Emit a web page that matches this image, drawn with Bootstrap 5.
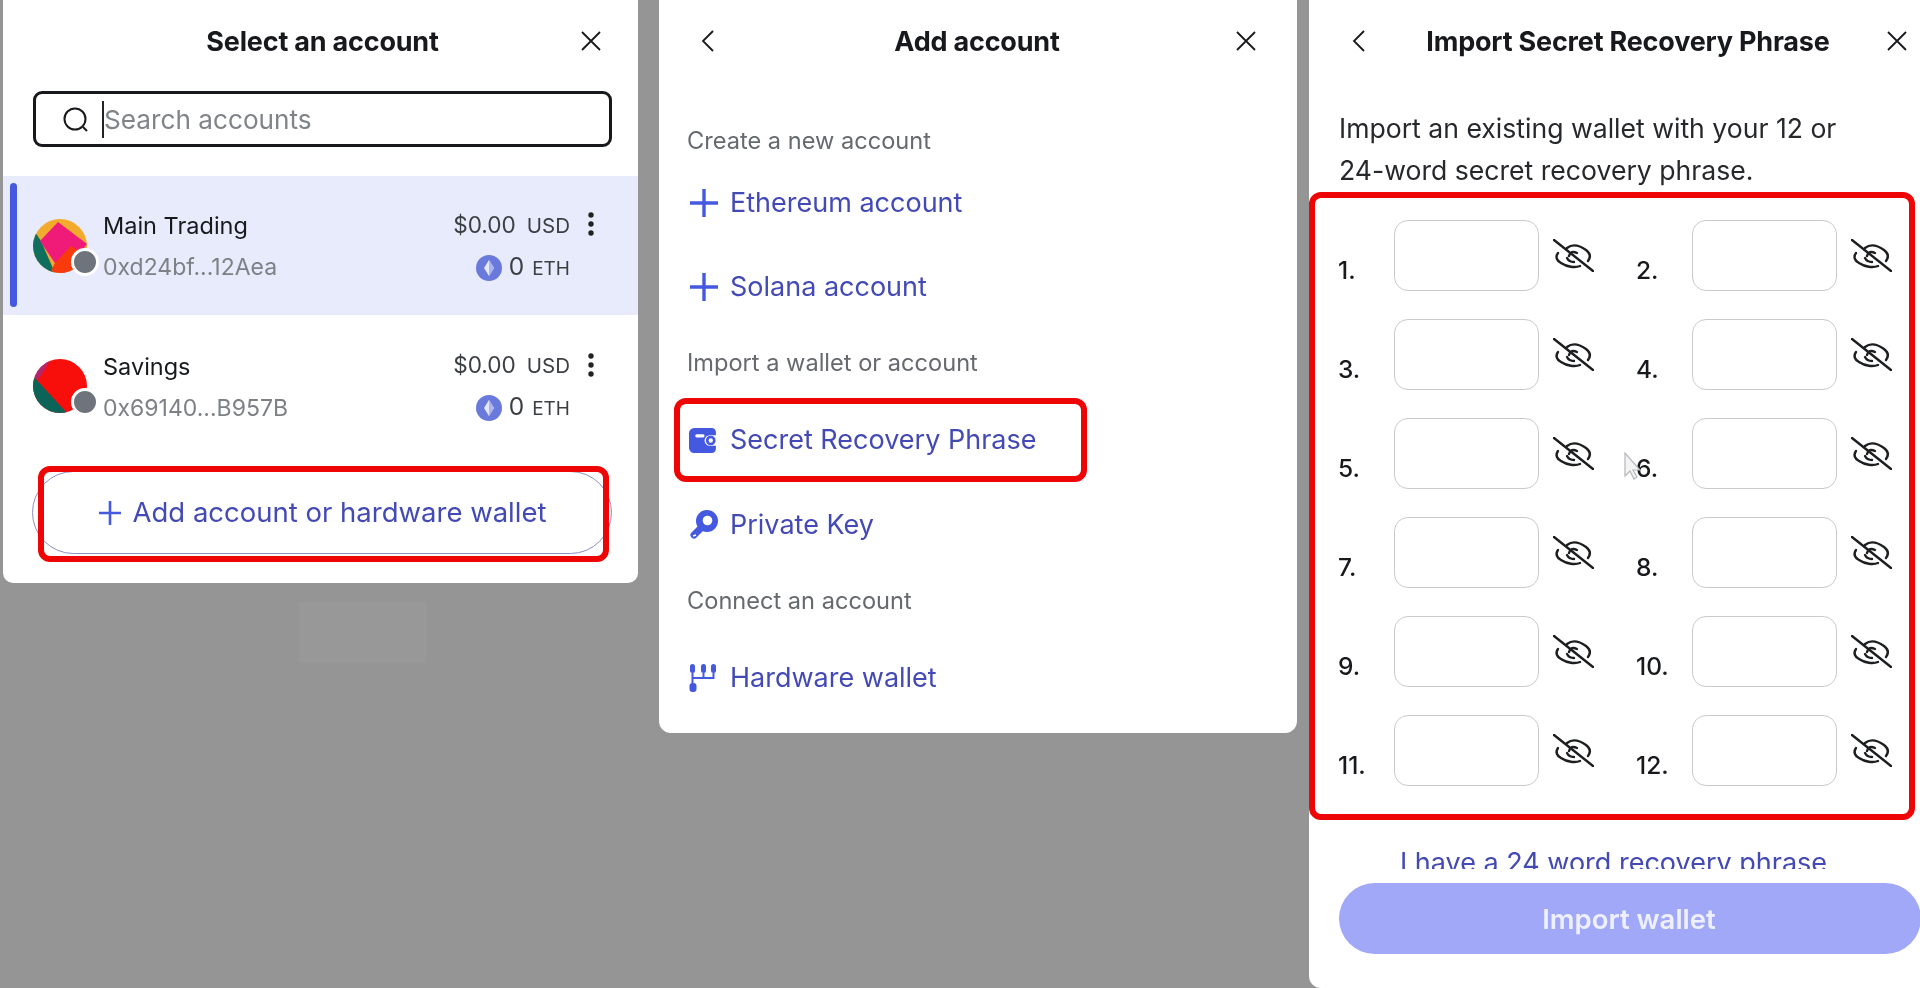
<!DOCTYPE html>
<html lang="en">
<head>
<meta charset="utf-8">
<title>Wallet account steps</title>
<link href="https://cdn.jsdelivr.net/npm/bootstrap@5.3.0/dist/css/bootstrap.min.css" rel="stylesheet">
<style>
:root { --ink:#17191c; --link:#4349b5; --accent:#4459e0; --mute:#666a6e; }
html, body { height:988px; overflow:hidden; }
body { background:#959595; font-family:Inter,"Noto Sans","Liberation Sans",sans-serif; color:var(--ink); }
.stage { height:988px; filter:blur(.45px); position:relative; }
.pane { background:#fff; flex:none; position:relative; }
.pane-a { width:635px; height:583px; margin-left:3px; border-radius:0 0 10px 10px; }
.pane-b { width:638px; height:733px; margin-left:21px; border-radius:0 0 12px 12px; }
.pane-c { width:612px; height:988px; margin-left:12px; border-radius:0 0 0 12px; }
.head { height:82px; font-size:27px; font-weight:700; letter-spacing:-.2px; }
.ttl { padding-top:2px; }
.head-btn { width:30px; height:30px; flex:none; }
.head-btn svg { display:block; }
.lead-a { margin-left:66px; }
.trail-a { margin-right:32px; }
.lead-b { margin-left:34px; }
.trail-b { margin-right:36px; }
.lead-c { margin-left:35px; }
.trail-c { margin-right:9px; }
.search-wrap { padding:9px 26px 29px 30px; }
.search-box { height:56px; border:3px solid #17191c; border-radius:9px; padding-left:26px; gap:12px; }
.search-text { font-size:26.200px; color:#808489; border-left:2px solid #222; line-height:36px; margin-left:1px; padding-top:1px; }
.acct { height:140px; padding:0 0 0 30px; }
.acct.on { background:#e8ebfb; height:139px; }
.acct.second { padding-top:2px; }
.acct-bar { position:absolute; left:7px; top:7px; bottom:8px; width:7px; border-radius:4px; background:var(--accent); }
.acct-main { width:70px; flex:none; position:relative; height:54px; }
.acct-dot { position:absolute; left:38px; top:29px; width:28px; height:28px; border-radius:50%; background:#6f737c; border:3px solid #fff; }
.acct-name { font-size:23.500px; line-height:34px; margin-top:2px; }
.acct-addr { font-size:23px; line-height:34px; color:#7d8186; margin-top:7px; }
.acct-right { width:140px; text-align:right; font-size:22.600px; line-height:34px; color:#3b3e42; white-space:nowrap; padding-top:2px; }
.unit { font-size:20.500px; margin-left:11px; }
.coin-row { font-size:24.500px; margin-top:6px; }
.coin-row .unit { font-size:19px; margin-left:8px; }
.eth-coin { margin-right:7px; vertical-align:-6px; }
.dots { width:6px; margin:36px 44px 0 18px; }
.add-btn { margin:16px 26px 0 29px; height:83px; border:1px solid #8a8fc4; border-radius:42px; background:#fff; color:var(--link); font-size:27.500px; gap:11px; }
.red-a, .red-b { position:absolute; border:6px solid #ee0505; border-radius:12px; pointer-events:none; }
.red-a { left:35px; top:466px; width:571px; height:96px; }
.red-b { left:15px; top:398px; width:413px; height:84px; }
.sec-label { font-size:23.600px; color:var(--mute); padding-left:28px; height:30px; line-height:30px; }
.menu-row { padding-left:30px; height:40px; color:var(--link); font-size:27px; gap:10px; line-height:40px; }
.menu-ico { width:31px; flex:none; }
.menu-ico svg { display:block; }
.gap-a { margin-top:44px; }
.gap-b { margin-top:27px; }
.gap-c { margin-top:44px; }
.gap-d { margin-top:41px; }
.gap-e { margin-top:42px; }
.gap-f { margin-top:45px; }
.blurb { font-size:26.600px; line-height:42px; padding:25px 0 0 30px; color:#26282b; height:110px; white-space:nowrap; }
.phrase { width:606px; border:6px solid #ee0505; border-radius:12px; padding:22px 0 28px 23px; grid-template-columns:298px 282px; row-gap:28px; }
.cell { height:71px; }
.num { width:56px; flex:none; font-size:24.500px; font-weight:500; align-self:flex-end; line-height:30px; padding-bottom:6px; }
.word { width:145px; height:71px; border:1.800px solid #c9cacc; border-radius:14px; background:#fff; flex:none; }
.eye { margin:19px 0 0 14px; flex:none; display:block; }
.more { height:49px; overflow:hidden; text-align:center; color:var(--link); font-size:27px; line-height:34px; padding-top:26px; padding-right:3px; white-space:nowrap; }
.go-wrap { padding:14px 0 0 30px; }
.go { width:582px; height:71px; border-radius:36px; background:#a1a8f8; color:#eef0ff; font-size:27.500px; font-weight:600; padding-right:2px; padding-top:2px; }
.pointer { position:absolute; left:314px; top:452px; }
.patch { position:absolute; left:299px; top:603px; width:128px; height:60px; background:#989898; }
</style>
</head>
<body>
<main class="stage d-flex align-items-start">
  <div class="patch"></div>

  <section class="pane pane-a">
    <div class="head d-flex align-items-center">
      <div class="flex-grow-1 text-center lead-a ttl">Select an account</div>
      <div class="head-btn trail-a d-flex align-items-center justify-content-center">
        <svg width="22" height="22" viewBox="0 0 22 22" fill="none" stroke="#17191c" stroke-width="1.800"><path d="M2 2l18 18M20 2L2 20"/></svg>
      </div>
    </div>
    <div class="search-wrap">
      <div class="search-box d-flex align-items-center">
        <svg width="27" height="27" viewBox="0 0 27 27" fill="none" stroke="#17191c" stroke-width="2"><circle cx="13" cy="13" r="10.500"/><path d="M21 21l4 4"/></svg>
        <span class="search-text">Search accounts</span>
      </div>
    </div>
    <div class="acct on d-flex align-items-center position-relative">
      <span class="acct-bar"></span>
      <div class="acct-main">
        <svg width="54" height="54" viewBox="0 0 54 54"><defs><clipPath id="ca"><circle cx="27" cy="27" r="27"/></clipPath></defs><g clip-path="url(#ca)"><rect width="54" height="54" fill="#f2ab2c"/><path d="M0 10L8 22 22 54H0z" fill="#0f6e5e"/><path d="M25 3L54 25 30 56 7 22z" fill="#f01a78"/><path d="M38 27L54 37 40 60 18 52 22 44z" fill="#f93a0c"/></g></svg>
        <span class="acct-dot"></span>
      </div>
      <div class="flex-grow-1">
        <div class="acct-name">Main Trading</div>
        <div class="acct-addr">0xd24bf...12Aea</div>
      </div>
      <div class="acct-right">
        <div>$0.00<span class="unit">USD</span></div>
        <div class="coin-row"><svg class="eth-coin" width="26" height="26" viewBox="0 0 26 26"><circle cx="13" cy="13" r="13" fill="#6a79dc"/><path d="M13 5l5 8-5 8-5-8z" fill="#e6e9fb"/><path d="M13 5v16l5-8z" fill="#aab4f0"/></svg>0<span class="unit">ETH</span></div>
      </div>
      <svg class="dots align-self-start" width="6" height="24" viewBox="0 0 6 24" fill="#222"><circle cx="3" cy="3" r="2.700"/><circle cx="3" cy="12" r="2.700"/><circle cx="3" cy="21" r="2.700"/></svg>
    </div>
    <div class="acct second d-flex align-items-center">
      <div class="acct-main">
        <svg width="54" height="54" viewBox="0 0 54 54"><defs><clipPath id="cb"><circle cx="27" cy="27" r="27"/></clipPath></defs><g clip-path="url(#cb)"><rect width="54" height="54" fill="#f80f0c"/><path d="M0 17L8 5 17 2 5 21z" fill="#b3266b"/><path d="M0 17L34 54H0z" fill="#0c6357"/></g></svg>
        <span class="acct-dot"></span>
      </div>
      <div class="flex-grow-1">
        <div class="acct-name">Savings</div>
        <div class="acct-addr">0x69140...B957B</div>
      </div>
      <div class="acct-right">
        <div>$0.00<span class="unit">USD</span></div>
        <div class="coin-row"><svg class="eth-coin" width="26" height="26" viewBox="0 0 26 26"><circle cx="13" cy="13" r="13" fill="#6a79dc"/><path d="M13 5l5 8-5 8-5-8z" fill="#e6e9fb"/><path d="M13 5v16l5-8z" fill="#aab4f0"/></svg>0<span class="unit">ETH</span></div>
      </div>
      <svg class="dots align-self-start" width="6" height="24" viewBox="0 0 6 24" fill="#222"><circle cx="3" cy="3" r="2.700"/><circle cx="3" cy="12" r="2.700"/><circle cx="3" cy="21" r="2.700"/></svg>
    </div>
    <div class="add-btn d-flex align-items-center justify-content-center">
      <svg width="24" height="26" viewBox="0 0 24 26" stroke="#4459e0" stroke-width="2.600" fill="none"><path d="M12 1v24M1 13h22"/></svg>
      <span>Add account or hardware wallet</span>
    </div>
    <div class="red-a"></div>
  </section>

  <section class="pane pane-b">
    <div class="head d-flex align-items-center justify-content-between">
      <div class="head-btn lead-b d-flex align-items-center justify-content-center">
        <svg width="14" height="22" viewBox="0 0 14 22" fill="none" stroke="#17191c" stroke-width="1.800"><path d="M12 1L2 11l10 10"/></svg>
      </div>
      <div class="ttl">Add account</div>
      <div class="head-btn trail-b d-flex align-items-center justify-content-center">
        <svg width="22" height="22" viewBox="0 0 22 22" fill="none" stroke="#17191c" stroke-width="1.800"><path d="M2 2l18 18M20 2L2 20"/></svg>
      </div>
    </div>
    <div class="sec-label gap-a">Create a new account</div>
    <div class="menu-row gap-b d-flex align-items-center">
      <span class="menu-ico"><svg width="30" height="30" viewBox="0 0 30 30" stroke="#4459e0" stroke-width="3.400" fill="none"><path d="M15 1v28M1 15h28"/></svg></span>Ethereum account</div>
    <div class="menu-row gap-c d-flex align-items-center">
      <span class="menu-ico"><svg width="30" height="30" viewBox="0 0 30 30" stroke="#4459e0" stroke-width="3.400" fill="none"><path d="M15 1v28M1 15h28"/></svg></span>Solana account</div>
    <div class="sec-label gap-d">Import a wallet or account</div>
    <div class="menu-row gap-e d-flex align-items-center">
      <span class="menu-ico"><svg width="29" height="25" viewBox="0 0 28 24"><path d="M5 0h17a4 4 0 0 1 4 4v3h-6a5 5 0 0 0 0 10h6v3a4 4 0 0 1-4 4H5a5 5 0 0 1-5-5V5a5 5 0 0 1 5-5z" fill="#4459e0"/><rect x="6" y="6" width="9" height="3" rx="1.500" fill="#fff"/><circle cx="21" cy="12" r="3.400" fill="none" stroke="#4459e0" stroke-width="2.600"/></svg></span>Secret Recovery Phrase</div>
    <div class="menu-row gap-f d-flex align-items-center">
      <span class="menu-ico"><svg width="29" height="30" viewBox="0 0 29 30"><circle cx="18" cy="11" r="11" fill="#4459e0"/><circle cx="18.500" cy="10.500" r="4.800" fill="#fff"/><path d="M12 18L5 25" stroke="#4459e0" stroke-width="7" stroke-linecap="round"/><path d="M4 26l3-1" stroke="#fff" stroke-width="1.500"/></svg></span>Private Key</div>
    <div class="sec-label gap-d">Connect an account</div>
    <div class="menu-row gap-e d-flex align-items-center">
      <span class="menu-ico"><svg width="28" height="30" viewBox="0 0 28 30" fill="#4459e0"><rect x="1" y="1" width="5" height="9" rx="2.500"/><rect x="12" y="1" width="5" height="9" rx="2.500"/><rect x="22" y="1" width="5" height="9" rx="2.500"/><path d="M3.500 10v12M3.500 15h21v-5M14.500 15v-5" fill="none" stroke="#4459e0" stroke-width="2"/><rect x="0.500" y="20" width="7" height="9" rx="3"/></svg></span>Hardware wallet</div>
    <div class="red-b"></div>
  </section>

  <section class="pane pane-c">
    <div class="head d-flex align-items-center">
      <div class="head-btn lead-c d-flex align-items-center justify-content-center">
        <svg width="14" height="22" viewBox="0 0 14 22" fill="none" stroke="#17191c" stroke-width="1.800"><path d="M12 1L2 11l10 10"/></svg>
      </div>
      <div class="flex-grow-1 text-center text-nowrap ttl">Import Secret Recovery Phrase</div>
      <div class="head-btn trail-c d-flex align-items-center justify-content-center">
        <svg width="22" height="22" viewBox="0 0 22 22" fill="none" stroke="#17191c" stroke-width="1.800"><path d="M2 2l18 18M20 2L2 20"/></svg>
      </div>
    </div>
    <p class="blurb mb-0">Import an existing wallet with your 12 or<br>24-word secret recovery phrase.</p>
    <div class="phrase d-grid" id="phrase"></div>
    <div class="more">I have a 24 word recovery phrase</div>
    <div class="go-wrap">
      <div class="go d-flex align-items-center justify-content-center">Import wallet</div>
    </div>
    <svg class="pointer" width="18" height="28" viewBox="0 0 18 28" fill="#f4f4f4" stroke="#b5b7bb" stroke-width="1.200"><path d="M2 1v23l5-5 4 8 3-2-4-7h7z"/></svg>
  </section>
</main>
<script>
var eye='<svg class="eye" width="41" height="33" viewBox="0 0 41 33" fill="none" stroke="#1c1e20" stroke-width="2.400" stroke-linecap="round"><path d="M1 1l39 31"/><path d="M14 9C19 5 26 6 33 11c4 3 5 7 2 11"/><path d="M5 14c-3 4-1 8 3 10 6 4 14 5 19 3"/><path d="M16 17c1-4 4-5 8-3"/><path d="M21 23c-3 0-6-2-7-4"/></svg>';
var html='';
for(var i=1;i<=12;i++){
  html+='<div class="cell d-flex"><span class="num">'+i+'.</span><span class="word"></span>'+eye+'</div>';
}
document.getElementById('phrase').innerHTML=html;
</script>
<script src="https://cdn.jsdelivr.net/npm/bootstrap@5.3.0/dist/js/bootstrap.bundle.min.js"></script>
</body>
</html>
